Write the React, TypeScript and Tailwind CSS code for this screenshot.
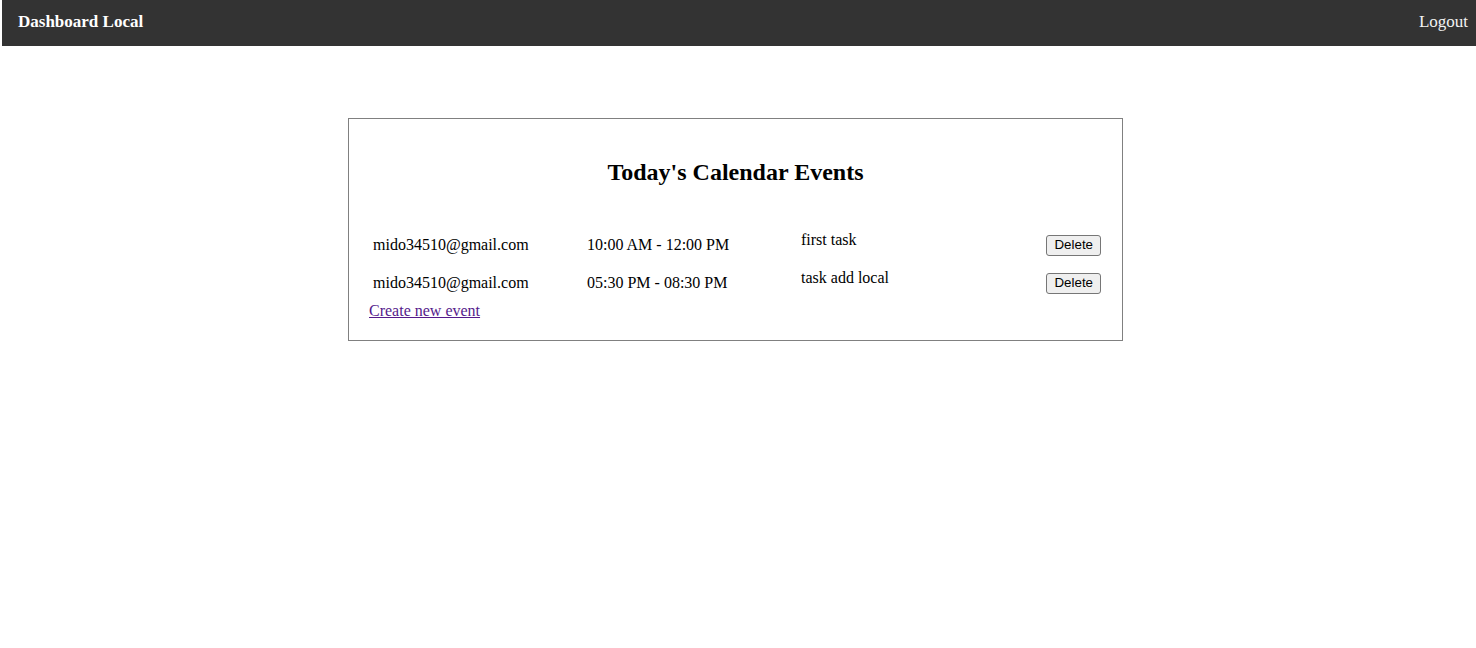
const events = [
  { email: "mido34510@gmail.com", time: "10:00 AM - 12:00 PM", title: "first task" },
  { email: "mido34510@gmail.com", time: "05:30 PM - 08:30 PM", title: "task add local" },
];

export default function App() {
  return (
    <div className="min-h-screen bg-white font-['Liberation_Serif',serif] text-[16px] text-black">
      <nav className="ml-[2px] flex h-[46px] items-center justify-between bg-[#333333] pb-[2px] pl-[16px] pr-[8px] text-[17px]">
        <span className="font-bold text-white">Dashboard Local</span>
        <a href="#" className="text-[#f2f2f2]">Logout</a>
      </nav>

      <main className="flex justify-center pr-[5px] pt-[72px]">
        <section className="w-[775px] border border-[#808080] px-[20px] pb-[20px] pt-[20px]">
          <h2 className="mb-[40px] mt-[19px] text-center text-[24px] font-bold leading-[28px]">Today's Calendar Events</h2>
          <div>
            {events.map((ev, i) => (
              <div key={i} className="grid h-[38px] grid-cols-[214px_214px_1fr_auto] items-center pl-[4px] pr-[1px]">
                <span>{ev.email}</span>
                <span>{ev.time}</span>
                <span className="pb-[10px]">{ev.title}</span>
                <button
                  type="button"
                  className="h-[21px] rounded-[3px] border border-[#767676] bg-[#efefef] px-[7px] font-['Liberation_Sans',Arial,sans-serif] text-[13.33px] leading-none"
                >
                  Delete
                </button>
              </div>
            ))}
          </div>
          <a href="#" className="block w-fit leading-[18px] text-[#551a8b] underline">Create new event</a>
        </section>
      </main>
    </div>
  );
}
